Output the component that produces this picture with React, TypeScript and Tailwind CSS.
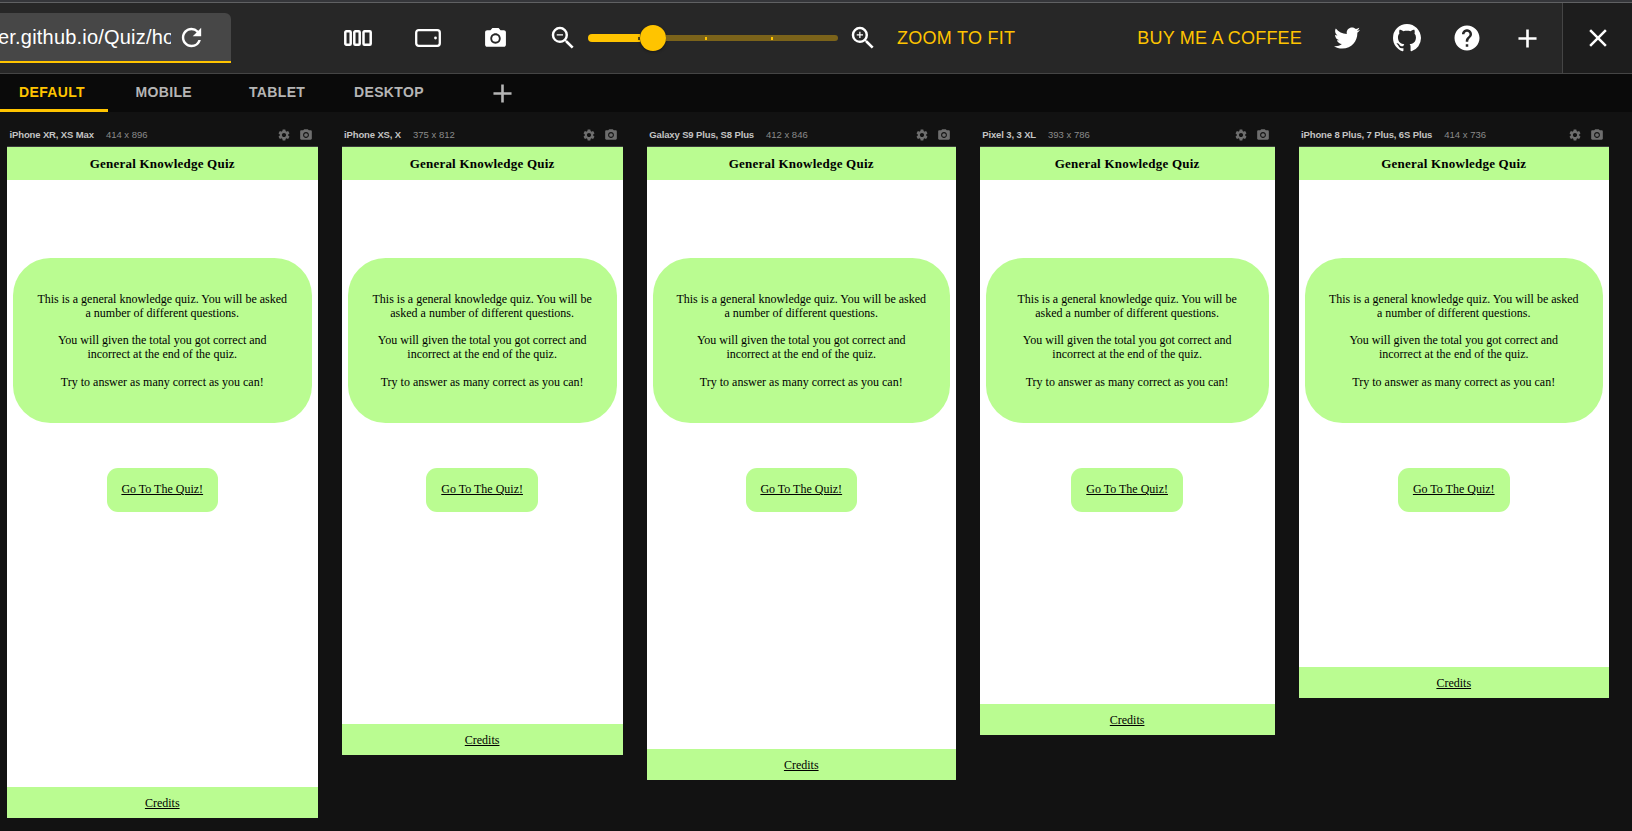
import React from "react";
import { MdSettings, MdCameraAlt, MdRefresh, MdAdd, MdClose, MdHelp, MdZoomIn, MdZoomOut } from "react-icons/md";
import { FaTwitter } from "react-icons/fa";
import { VscGithubInverted } from "react-icons/vsc";

type Device = { name: string; size: string; frame: string };

const devices: Device[] = [
  { name: "iPhone XR, XS Max", size: "414 x 896", frame: "w-[310.5px] h-[671px]" },
  { name: "iPhone XS, X", size: "375 x 812", frame: "w-[281.25px] h-[608px]" },
  { name: "Galaxy S9 Plus, S8 Plus", size: "412 x 846", frame: "w-[309px] h-[633px]" },
  { name: "Pixel 3, 3 XL", size: "393 x 786", frame: "w-[294.75px] h-[588px]" },
  { name: "iPhone 8 Plus, 7 Plus, 6S Plus", size: "414 x 736", frame: "w-[310.5px] h-[551px]" },
];

function QuizPage() {
  return (
    <div className="flex h-full flex-col bg-white font-['Liberation_Serif',serif] text-[12px] leading-[14px] text-black">
      <header className="flex h-[33px] shrink-0 items-center justify-center bg-[#bafc91] text-[13px] font-bold tracking-[0.22px]">
        General Knowledge Quiz
      </header>
      <main className="flex flex-1 flex-col items-center px-[6px] pt-[77.5px]">
        <section className="flex h-[165.5px] w-full flex-col gap-[13.3px] rounded-[37.5px] bg-[#bafc91] px-[22px] pt-[34.5px] text-center">
          <p>This is a general knowledge quiz. You will be asked a number of different questions.</p>
          <p>
            You will given the total you got correct and
            <br />
            incorrect at the end of the quiz.
          </p>
          <p>Try to answer as many correct as you can!</p>
        </section>
        <a className="mt-[45px] flex h-[43.5px] w-[111.5px] items-center justify-center rounded-[11px] bg-[#bafc91] pb-[1px] underline">
          Go To The Quiz!
        </a>
      </main>
      <footer className="flex h-[31px] shrink-0 items-center justify-center bg-[#bafc91]">
        <a className="underline">Credits</a>
      </footer>
    </div>
  );
}

function DevicePreview({ device }: { device: Device }) {
  return (
    <div className="flex shrink-0 flex-col">
      <div className="flex h-[35px] items-center border-b border-[#3a3a3a] pt-[12px] pr-[5px] pl-[2.5px] text-[9.5px] whitespace-nowrap">
        <span className="font-bold tracking-[-0.13px] text-[#c4c4c4]">{device.name}</span>
        <span className="ml-[12px] text-[#8a8a8a]">{device.size}</span>
        <span className="ml-auto flex gap-[8px] text-[#6e6e6e]">
          <MdSettings size={14} />
          <MdCameraAlt size={14} />
        </span>
      </div>
      <div className={`overflow-hidden rounded-[1px] ${device.frame}`}>
        <QuizPage />
      </div>
    </div>
  );
}

export default function App() {
  return (
    <div className="flex h-[831px] w-[1632px] flex-col overflow-hidden bg-[#121212] font-['Liberation_Sans',sans-serif]">
      <div className="h-[3px] shrink-0 border-b border-[#606163] bg-[#35363a]" />
      <div className="flex h-[71px] shrink-0 items-center border-b border-[#454545] bg-[#272727] text-white">
        <div className="flex h-[50px] w-[231px] items-center rounded-tr-[6px] border-b-2 border-[#ffc400] bg-[#474747]">
          <div className="flex w-[171px] justify-start overflow-hidden text-[20px] whitespace-nowrap">
            <span className="-ml-[2px] tracking-[0.2px]">er.github.io/Quiz/home</span>
          </div>
          <MdRefresh size={29} className="ml-[5.5px]" />
        </div>
        <svg className="ml-[113px] shrink-0" width="28" height="16" viewBox="0 0 28 16" fill="none" stroke="currentColor" strokeWidth="2.5">
          <rect x="1.3" y="1.3" width="5.4" height="13.4" rx="1" />
          <rect x="10.3" y="1.3" width="5.4" height="13.4" rx="1" />
          <rect x="19.5" y="1.3" width="7.2" height="13.4" rx="1" />
        </svg>
        <svg className="ml-[43px] shrink-0" width="26" height="18" viewBox="0 0 26 18" fill="none" stroke="currentColor" strokeWidth="2.3">
          <rect x="1.2" y="1.2" width="23.6" height="15.6" rx="2.5" />
          <circle cx="20.5" cy="9" r="1.4" fill="currentColor" stroke="none" />
        </svg>
        <MdCameraAlt size={25} className="ml-[42px] shrink-0" />
        <MdZoomOut size={30} className="ml-[40px] shrink-0" />
        <div className="ml-[10px] flex w-[250px] shrink-0 items-center">
          <span className="flex h-[8px] w-[52px] items-center justify-end rounded-l-full bg-[#ffc400]">
            <i className="h-[3px] w-[2px] bg-[#5a4a10]" />
          </span>
          <span className="h-[26px] w-[26px] rounded-full bg-[#ffc400] shadow-[0_1px_3px_rgba(0,0,0,0.4)]" />
          <span className="flex h-[6px] flex-1 items-center rounded-r-full bg-[#7b631a] pl-[39px]">
            <i className="h-[3px] w-[2px] bg-[#ffc400]" />
            <i className="ml-[64px] h-[3px] w-[2px] bg-[#ffc400]" />
          </span>
        </div>
        <MdZoomIn size={30} className="ml-[10px] shrink-0" />
        <span className="ml-[19px] text-[18px] tracking-[0.26px] text-[#ffc400]">ZOOM TO FIT</span>
        <span className="ml-auto text-[18px] tracking-[0.2px] text-[#ffc400]">BUY ME A COFFEE</span>
        <span className="mr-[19px] ml-[32px] flex items-center">
          <FaTwitter size={26} />
          <VscGithubInverted size={28} className="ml-[33px]" />
          <MdHelp size={30} className="ml-[31px]" />
          <MdAdd size={31} className="ml-[30px]" />
        </span>
        <div className="flex h-[70px] w-[70px] items-center justify-center border-l border-[#454545] bg-[#1d1d1d]">
          <MdClose size={30} />
        </div>
      </div>
      <nav className="flex h-[38px] shrink-0 items-stretch bg-[#0a0a0a] text-[14px] font-bold tracking-[0.35px] text-[#b5b5b5]">
        <span className="flex w-[108px] items-center border-b-[3px] border-[#ffc400] pt-[2px] pl-[19px] text-[#ffc400]">DEFAULT</span>
        <span className="flex w-[114px] items-center pb-[1px] pl-[27.5px]">MOBILE</span>
        <span className="flex w-[105px] items-center pb-[1px] pl-[27px]">TABLET</span>
        <span className="flex w-[159.5px] items-center pb-[1px] pl-[27px]">DESKTOP</span>
        <MdAdd size={31} className="self-center" />
      </nav>
      <div className="flex flex-1 items-start gap-6 pl-[7px]">
        {devices.map((d) => (
          <DevicePreview key={d.name} device={d} />
        ))}
        <span className="mt-[2px] -mr-6 ml-auto h-[266px] w-[10px] rounded-full bg-[#0e0e0e]" />
      </div>
    </div>
  );
}
